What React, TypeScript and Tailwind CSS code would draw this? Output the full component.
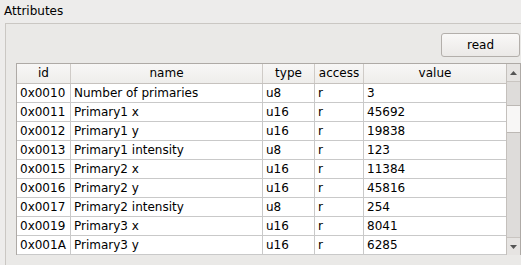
const rows = [
  { id: "0x0010", name: "Number of primaries", type: "u8", access: "r", value: "3" },
  { id: "0x0011", name: "Primary1 x", type: "u16", access: "r", value: "45692" },
  { id: "0x0012", name: "Primary1 y", type: "u16", access: "r", value: "19838" },
  { id: "0x0013", name: "Primary1 intensity", type: "u8", access: "r", value: "123" },
  { id: "0x0015", name: "Primary2 x", type: "u16", access: "r", value: "11384" },
  { id: "0x0016", name: "Primary2 y", type: "u16", access: "r", value: "45816" },
  { id: "0x0017", name: "Primary2 intensity", type: "u8", access: "r", value: "254" },
  { id: "0x0019", name: "Primary3 x", type: "u16", access: "r", value: "8041" },
  { id: "0x001A", name: "Primary3 y", type: "u16", access: "r", value: "6285" },
];

const cols = "grid grid-cols-[54px_192px_52px_49px_142px]";

function ScrollBar() {
  return (
    <div className="flex w-[14px] flex-col border-l border-[#c4c0bc] bg-[#dedcda]">
      <div className="flex h-[18px] items-center justify-center border-b border-[#c9c5c1] bg-[#e6e4e2]">
        <svg width="7" height="4" viewBox="0 0 7 4">
          <path d="M0 4 L3.5 0 L7 4 Z" fill="#555" />
        </svg>
      </div>
      <div className="flex-1">
        <div className="mt-[23px] h-[28px] border-y border-[#bcb8b4] bg-[#f8f7f6]" />
      </div>
      <div className="flex h-[18px] items-center justify-center border-t border-[#c9c5c1] bg-[#e6e4e2]">
        <svg width="7" height="4" viewBox="0 0 7 4">
          <path d="M0 0 L3.5 4 L7 0 Z" fill="#555" />
        </svg>
      </div>
    </div>
  );
}

export default function App() {
  return (
    <div
      className="flex h-[265px] w-[521px] flex-col overflow-hidden bg-[#edeceb] text-[12px] text-black"
      style={{ fontFamily: '"DejaVu Sans", sans-serif' }}
    >
      <div className="h-[23px] pl-[4px] pt-[4px] leading-[14px]">Attributes</div>
      <div className="ml-[5px] flex flex-1 flex-col border-l border-t border-[#cac7c3] bg-[#eae9e7] pl-[10px]">
        <div className="flex justify-end pr-[1px] pt-[9px]">
          <button className="h-[24px] w-[79px] rounded-[3px] border border-[#b3afab] bg-gradient-to-b from-[#f9f8f7] to-[#ebe9e7] text-[12px] leading-[20px]">
            read
          </button>
        </div>
        <div className="mt-[6px] flex w-[505px] border-x border-t border-[#aeaaa6] bg-white">
          <div className="flex flex-col">
            <div className={`${cols} h-[20px] border-b border-[#c6c2be] bg-gradient-to-b from-[#f8f7f6] to-[#eeedeb] leading-[19px]`}>
              <div className="border-r border-[#cfcbc7] text-center">id</div>
              <div className="border-r border-[#cfcbc7] text-center">name</div>
              <div className="border-r border-[#cfcbc7] text-center">type</div>
              <div className="border-r border-[#cfcbc7] text-center">access</div>
              <div className="text-center">value</div>
            </div>
            {rows.map((r) => (
              <div key={r.id} className={`${cols} h-[19px] border-b border-[#c9c9c9] leading-[18px]`}>
                <div className="border-r border-[#c9c9c9] pl-[3px]">{r.id}</div>
                <div className="border-r border-[#c9c9c9] pl-[3px]">{r.name}</div>
                <div className="border-r border-[#c9c9c9] pl-[3px]">{r.type}</div>
                <div className="border-r border-[#c9c9c9] pl-[3px]">{r.access}</div>
                <div className="pl-[3px]">{r.value}</div>
              </div>
            ))}
          </div>
          <ScrollBar />
        </div>
      </div>
    </div>
  );
}
